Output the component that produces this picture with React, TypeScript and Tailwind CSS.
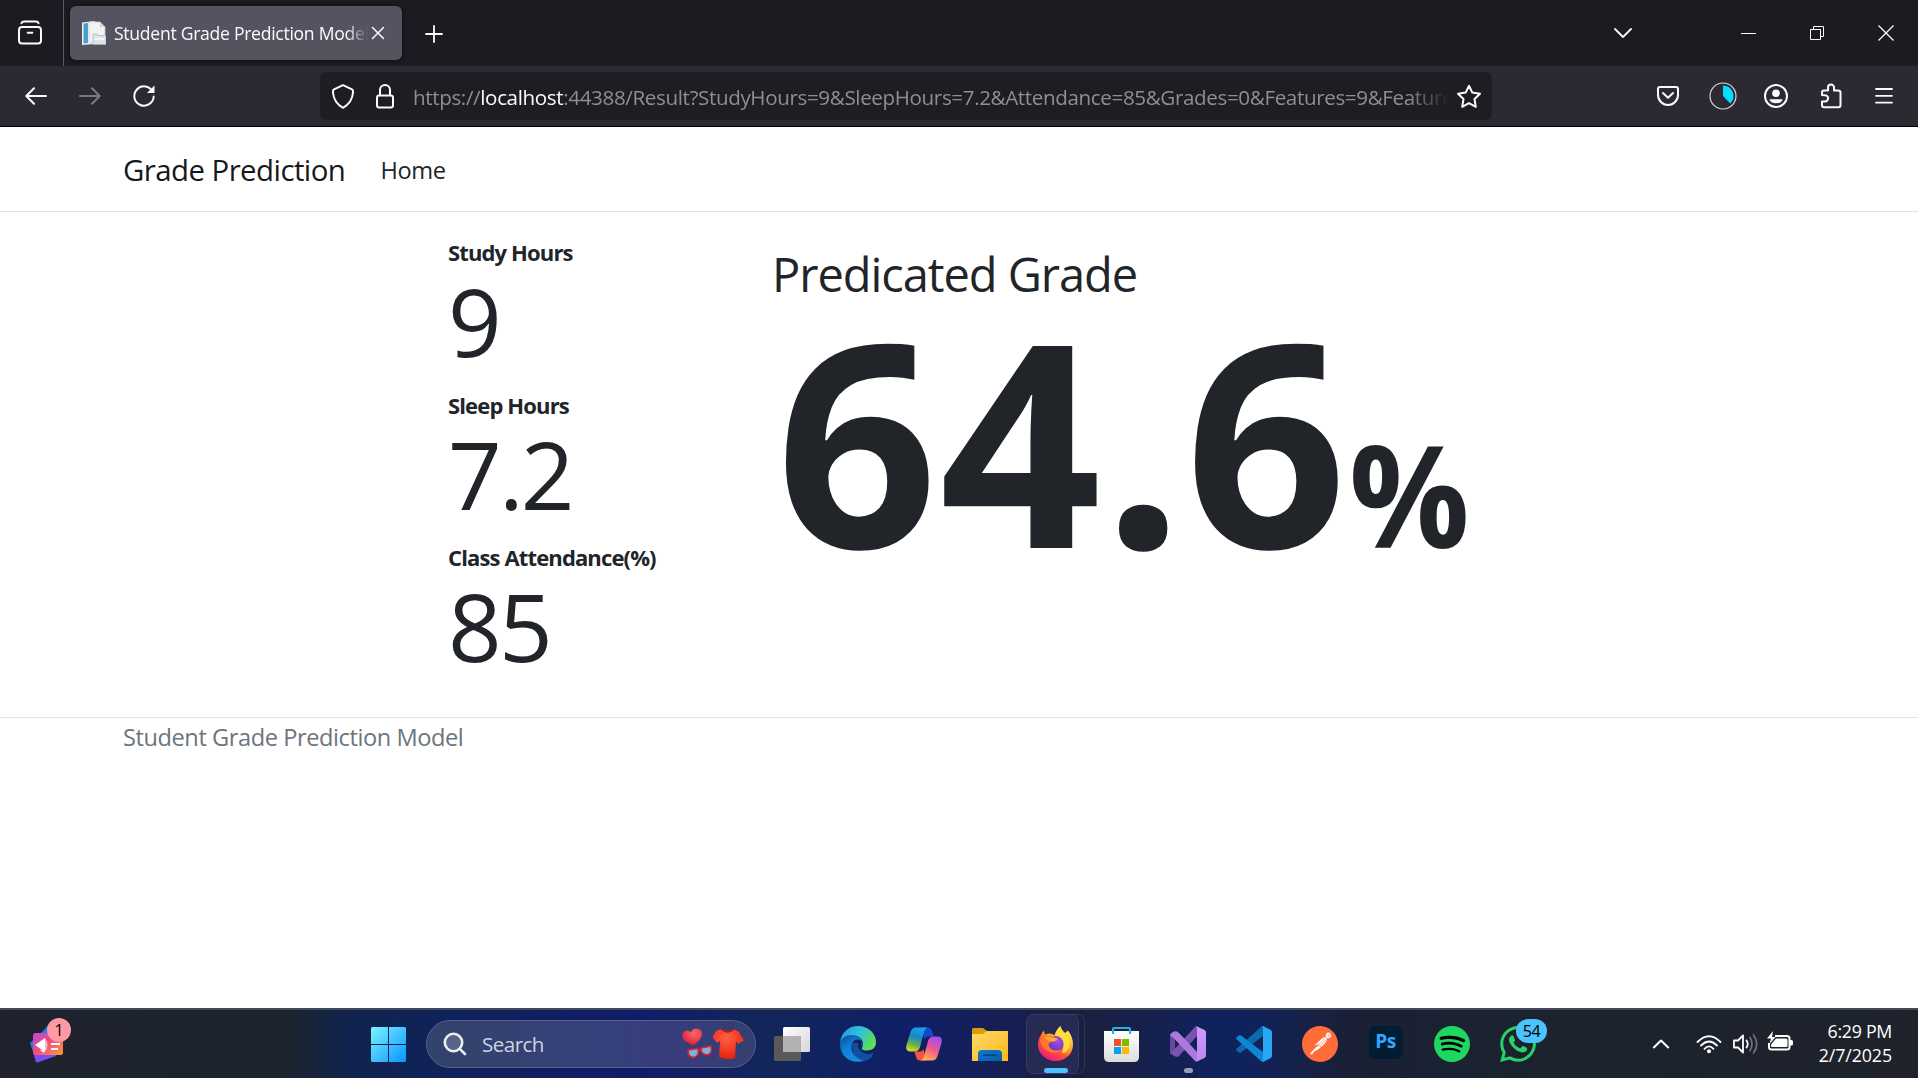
import type { ReactNode } from "react";
import { SiPostman, SiSpotify, SiWhatsapp } from "react-icons/si";

function TabStrip() {
  return (
    <div className="flex h-[66px] items-center bg-[#1c1b22] text-[#fbfbfe]">
      <div className="flex h-full w-16 items-center border-r border-[#5b5a66] pl-[17px]">
        <svg width="26" height="26" viewBox="0 0 26 26" fill="none" stroke="currentColor" strokeWidth="2" strokeLinecap="round">
          <path d="M4.5 3.2 Q5 1.5 7 1.5 H19 Q21 1.5 21.5 3.2" />
          <rect x="2" y="7" width="22" height="16.5" rx="3" />
          <path d="M10.7 12.8 h4.6" />
        </svg>
      </div>
      <div className="ml-1.5 flex h-[54px] w-[332px] items-center rounded-md bg-[#55535f] pl-3 shadow-[0_0_4px_rgba(0,0,0,0.6)]">
        <svg width="24" height="24" viewBox="0 0 24 24">
          <path d="M0 1.5 L13 0 V23 L0 24z" fill="#eef3f6" />
          <path d="M1.5 2.5 L6 2 V22 L1.5 22.5z" fill="#4b9fd0" />
          <path d="M7 1 H18 L23 6 V22 H7z" fill="#f0f2f4" stroke="#cdd4da" strokeWidth=".7" />
          <path d="M18 1 v5 h5z" fill="#cfd5da" />
          <path d="M11 13 h4 l1 1.5 h8 V23.5 H11z" fill="#dfe3e8" stroke="#a9b1ba" strokeWidth=".7" />
          <path d="M12.5 18 H22.5" stroke="#f8fafb" strokeWidth="1.5" />
        </svg>
        <div className="ml-2 w-[254px] overflow-hidden whitespace-nowrap text-[17.6px] leading-[26px] tracking-[-0.29px] [mask-image:linear-gradient(to_right,black_232px,transparent_254px)]">
          Student Grade Prediction Model
        </div>
        <svg className="ml-[3px]" width="14" height="14" viewBox="0 0 14 14" stroke="currentColor" strokeWidth="1.5" strokeLinecap="round">
          <path d="M1.5 1.5 L12.5 12.5 M12.5 1.5 L1.5 12.5" />
        </svg>
      </div>
      <svg className="ml-[23px] mt-[2px]" width="18" height="18" viewBox="0 0 18 18" stroke="currentColor" strokeWidth="1.8" strokeLinecap="round">
        <path d="M9 1 V17 M1 9 H17" />
      </svg>
      <div className="ml-auto flex items-center">
        <svg width="18" height="10" viewBox="0 0 18 10" fill="none" stroke="currentColor" strokeWidth="1.8" strokeLinecap="round" strokeLinejoin="round">
          <path d="M1 1 L9 9 L17 1" />
        </svg>
        <div className="ml-[109px] h-px w-[15px] bg-white" />
        <svg className="ml-[54px]" width="14" height="14" viewBox="0 0 14 14" fill="none" stroke="currentColor" strokeWidth="1">
          <path d="M.5 3.5 h10 v10 h-10z M3.5 3.5 v-3 h10 v10 h-3" />
        </svg>
        <svg className="ml-[54px] mr-6" width="16" height="16" viewBox="0 0 16 16" stroke="currentColor" strokeWidth="1.3">
          <path d="M.5 .5 L15.5 15.5 M15.5 .5 L.5 15.5" />
        </svg>
      </div>
    </div>
  );
}

function Toolbar() {
  return (
    <div className="flex h-[61px] items-center border-b border-black bg-[#2b2a33] text-[#fbfbfe]">
      <svg className="ml-[25px]" width="22" height="18" viewBox="0 0 22 18" fill="none" stroke="currentColor" strokeWidth="2" strokeLinecap="round" strokeLinejoin="round">
        <path d="M21 9 H1.5 M9 1.2 L1.3 9 L9 16.8" />
      </svg>
      <svg className="ml-8 text-[#7b7a82]" width="22" height="18" viewBox="0 0 22 18" fill="none" stroke="currentColor" strokeWidth="2" strokeLinecap="round" strokeLinejoin="round">
        <path d="M1 9 H20.5 M13 1.2 L20.7 9 L13 16.8" />
      </svg>
      <svg className="ml-[31px]" width="24" height="24" viewBox="0 0 24 24" fill="none" stroke="currentColor" strokeWidth="2" strokeLinecap="round">
        <path d="M20.6 7.5 A9.7 9.7 0 1 0 21.7 12.5" />
        <path d="M22.500 1.500 V9 H15z" fill="currentColor" stroke="none" />
      </svg>
      <div className="ml-[164px] flex h-12 w-[1172px] items-center rounded-md bg-[#1e1d24] pl-3">
        <svg width="22" height="25" viewBox="0 0 22 25" fill="none" stroke="currentColor" strokeWidth="2" strokeLinejoin="round">
          <path d="M11 1.2 L20 5.3 Q21.3 6 21 8.5 Q20.3 18.5 11 23.8 Q1.7 18.5 1 8.5 Q.7 6 2 5.3z" />
        </svg>
        <svg className="ml-[21px]" width="20" height="25" viewBox="0 0 20 25" fill="none" stroke="currentColor" strokeWidth="2">
          <rect x="2" y="11.5" width="16" height="12" rx="2.2" />
          <path d="M5 11.5 V6 a5 5 0 0 1 10 0 V11.5" />
        </svg>
        <div className="ml-[18px] mt-[2px] w-[1036px] overflow-hidden whitespace-nowrap text-[20.6px] leading-7 tracking-[-0.37px] text-[#8f8e94] [mask-image:linear-gradient(to_right,black_995px,transparent_1036px)]">
          https://<span className="text-[#fbfbfe]">localhost</span>
          :44388/Result?StudyHours=9&amp;SleepHours=7.2&amp;Attendance=85&amp;Grades=0&amp;Features=9&amp;Features=7.2
        </div>
        <svg className="ml-[7px] shrink-0" width="26" height="25" viewBox="0 0 26 25" fill="none" stroke="currentColor" strokeWidth="2" strokeLinejoin="round">
          <path d="M13 1.8 L16.3 8.6 L24 9.7 L18.5 15 L19.8 22.8 L13 19.1 L6.2 22.8 L7.5 15 L2 9.7 L9.7 8.6z" />
        </svg>
      </div>
      <div className="ml-auto flex items-center pr-[25px]">
        <svg width="22" height="20" viewBox="0 0 22 20" fill="none" stroke="currentColor" strokeWidth="2" strokeLinecap="round" strokeLinejoin="round">
          <path d="M3 1 H19 Q21 1 21 3 V9 A10 10 0 0 1 1 9 V3 Q1 1 3 1z" />
          <path d="M6 7 L11 11.8 L16 7" />
        </svg>
        <svg className="ml-[30px]" width="28" height="28" viewBox="0 0 28 28" fill="none">
          <circle cx="14" cy="14" r="13" stroke="#d8d8dc" strokeWidth="1.2" />
          <path d="M14 14 V3.5 A10.5 10.5 0 0 1 21.2 21.6z" fill="#00ddff" />
        </svg>
        <svg className="ml-[26px]" width="26" height="26" viewBox="0 0 26 26" fill="none">
          <circle cx="13" cy="13" r="11" stroke="currentColor" strokeWidth="2" />
          <circle cx="13" cy="10.3" r="3.8" fill="currentColor" />
          <path d="M6.3 16.2 H19.7 Q18.5 20.3 13 20.3 Q7.5 20.3 6.3 16.2z" fill="currentColor" />
        </svg>
        <svg className="ml-[31px]" width="22" height="26" viewBox="0 0 22 26" fill="none" stroke="currentColor" strokeWidth="2" strokeLinejoin="round">
          <path d="M2 12 V9.5 Q2 7.5 4 7.5 H8 V4.5 a3 3 0 0 1 6 0 V7.5 H18 Q20.5 7.5 20.5 9.5 V22 Q20.5 24.2 18.5 24.2 H4 Q2 24.2 2 22.2 V18.5 H5 a3 3 0 0 0 0 -6.3z" />
        </svg>
        <svg className="ml-[33px]" width="18" height="18" viewBox="0 0 18 18" stroke="currentColor" strokeWidth="1.8" strokeLinecap="round">
          <path d="M1 2 H17 M1 8.8 H17 M1 15.6 H17" />
        </svg>
      </div>
    </div>
  );
}

function Stat({ label, value }: { label: string; value: string }) {
  return (
    <div className="h-[152.5px]">
      <div className="text-[22px] font-bold leading-[26px] tracking-[-0.86px]">{label}</div>
      <div className="text-[94px] leading-[113px] tracking-[-2.8px]">{value}</div>
    </div>
  );
}

function Page() {
  return (
    <div className="flex h-[881px] flex-col bg-white text-[#212529]">
      <header className="flex h-[85px] items-start border-b border-[#dee2e6] pl-[123px] pt-[19px]">
        <span className="w-[257.500px] text-[29.4px] leading-[48px] tracking-[-0.55px] text-[#16191c]">Grade Prediction</span>
        <span className="text-[23.6px] leading-[48px] tracking-[-0.4px]">Home</span>
      </header>
      <main className="flex h-[505px] pl-[448px] pt-[27px]">
        <div className="w-[324px]">
          <Stat label="Study Hours" value="9" />
          <Stat label="Sleep Hours" value="7.2" />
          <Stat label="Class Attendance(%)" value="85" />
        </div>
        <div>
          <h1 className="mt-[5px] text-[47px] leading-[60px] tracking-[-1.05px]">Predicated Grade</h1>
          <div className="ml-[4px] flex items-baseline whitespace-nowrap font-bold leading-[270px]">
            <span className="text-[283px] tracking-[1.6px]">64.6</span>
            <span className="inline-block origin-left scale-x-[0.95] text-[141px]">%</span>
          </div>
        </div>
      </main>
      <footer className="border-t border-[#dee2e6] pl-[123px] text-[23.6px] leading-[39px] tracking-[-0.43px] text-[#6c757d]">
        Student Grade Prediction Model
      </footer>
    </div>
  );
}

function Cell({ children }: { children: ReactNode }) {
  return <div className="relative flex h-full w-[66px] items-center justify-center">{children}</div>;
}

function NewsIcon() {
  return (
    <svg width="42" height="46" viewBox="0 0 42 46">
      <defs>
        <linearGradient id="news" x1="0" y1="0" x2="1" y2="1">
          <stop offset="0" stopColor="#b44be0" />
          <stop offset=".45" stopColor="#f5487f" />
          <stop offset="1" stopColor="#ff9a3a" />
        </linearGradient>
      </defs>
      <path d="M0 25 L14 12 L18 7 L26 30 L5 40z" fill="#1f7de0" />
      <path d="M3 32 H28 L26 38 L9 44 Q6 45 5.5 43z" fill="#7a4df3" />
      <rect x="3" y="15" width="30" height="22" rx="2.5" fill="url(#news)" />
      <path d="M5 27 L15 20 V34z" fill="#fff" />
      <path d="M15 20 Q20 27 15 34z" fill="#ffb3cf" />
      <path d="M10 32 h4 v3z" fill="#fff" />
      <path d="M21 26 h9 M21 31 h7" stroke="#fff" strokeWidth="2" />
    </svg>
  );
}

function StartIcon() {
  return (
    <svg width="35" height="35" viewBox="0 0 35 35">
      <defs>
        <linearGradient id="start" gradientUnits="userSpaceOnUse" x1="0" y1="0" x2="35" y2="35">
          <stop offset="0" stopColor="#7df3ff" />
          <stop offset="1" stopColor="#0894ff" />
        </linearGradient>
      </defs>
      <path fill="url(#start)" d="M1 0 H17 V17 H0 V1z M18 0 H34 L35 1 V17 H18z M0 18 H17 V35 H1 L0 34z M18 18 H35 V34 L34 35 H18z" />
    </svg>
  );
}

function SearchArt() {
  return (
    <svg width="64" height="34" viewBox="0 0 64 34">
      <defs>
        <radialGradient id="heart" cx=".6" cy=".3" r=".8">
          <stop offset="0" stopColor="#ff6a6a" />
          <stop offset="1" stopColor="#d3152c" />
        </radialGradient>
        <radialGradient id="shirt" cx=".45" cy=".3" r=".7">
          <stop offset="0" stopColor="#ff6044" />
          <stop offset="1" stopColor="#e8200f" />
        </radialGradient>
      </defs>
      <path d="M12 18.5 C5 15 1 12.5 1.3 8 C1.7 3.5 7 1.8 9.8 5.5 C11 1 17 .3 20 3.5 C23.5 8 18 15 12 18.5z" fill="url(#heart)" />
      <g fill="#7fb0d8" stroke="#d81f35" strokeWidth="1.6" strokeLinejoin="round">
        <path d="M7 23 L17 21.5 Q18.5 28 14 30 Q9 31 7.5 27z" />
        <path d="M20 21 L30 19 Q31.5 25.5 27.5 27.5 Q22.5 29 20.5 24.5z" />
        <path d="M17 23 L20 22.5" />
      </g>
      <path d="M40 2 Q47 6 53 2 L58 5 L63 13.5 L57 17 L55 14 L54 31 Q46 33.5 38 30 L39 14 L36 16 L31.5 10 L35 4z" fill="url(#shirt)" />
      <path d="M40 2 Q47 8 53 2" fill="none" stroke="#b3150c" strokeWidth="1.2" />
    </svg>
  );
}

function TaskViewIcon() {
  return (
    <svg width="36" height="36" viewBox="0 0 36 36">
      <defs>
        <linearGradient id="tv" x1="0" y1="0" x2="1" y2="1">
          <stop offset="0" stopColor="#fff" />
          <stop offset="1" stopColor="#d6d6d6" />
        </linearGradient>
      </defs>
      <rect x="0" y="10" width="27" height="25" rx="1.5" fill="#595959" />
      <rect x="9" y="1" width="27" height="25" rx="1.5" fill="url(#tv)" />
      <path d="M9 10 H27 V26 H10 L9 25z" fill="#b2b2b4" />
    </svg>
  );
}

function EdgeIcon() {
  return (
    <svg width="36" height="36" viewBox="0 0 36 36">
      <defs>
        <linearGradient id="edgeTop" x1="0" y1=".2" x2="1" y2=".6">
          <stop offset="0" stopColor="#1a9be0" />
          <stop offset=".5" stopColor="#2fc2d8" />
          <stop offset="1" stopColor="#63e04d" />
        </linearGradient>
        <linearGradient id="edgeMid" x1="0" y1="0" x2=".6" y2="1">
          <stop offset="0" stopColor="#0c4c94" />
          <stop offset=".5" stopColor="#0f7fd8" />
          <stop offset="1" stopColor="#168de6" />
        </linearGradient>
      </defs>
      <path d="M11 17 H26 V30 H33 A18 18 0 0 1 16 35z" fill="#104d9c" />
      <path d="M0 18 C1 11 7 8.5 12 9 C18 9.5 21 13 21 14.5 C17 12 12 14 11.5 20 C11 28 17 33 24 34.5 C12 39 0 31 0 18z" fill="url(#edgeMid)" />
      <path d="M0 17 C1 6 9 0 18 0 C29 0 36 8 36 16 C36 22 32 24.5 27 24.5 C23 24.5 21.5 23 22 22 C25 18 22 9 12 9 C6 9 1.5 12 0 17z" fill="url(#edgeTop)" />
      <path d="M22 22 C20 24 24 26.5 34 23.5 L36 25 L34 29 Q28 31 22 28 Q16 24 18.5 17 Q21 13.5 22 22z" fill="#111f62" />
      <path d="M18 17 C17 25 25 30 34 27 C32 31 28 34 23 34.5 C14 32 11 25 14 19z" fill="#124f9f" />
    </svg>
  );
}

function CopilotIcon() {
  return (
    <svg width="36" height="34" viewBox="0 0 36 34">
      <defs>
        <linearGradient id="copA" x1=".6" y1="0" x2=".3" y2="1">
          <stop offset="0" stopColor="#16a5e8" />
          <stop offset=".4" stopColor="#1688c8" />
          <stop offset=".7" stopColor="#5fb052" />
          <stop offset="1" stopColor="#e6d51c" />
        </linearGradient>
        <linearGradient id="copB" x1=".7" y1="0" x2=".3" y2="1">
          <stop offset="0" stopColor="#a24cf0" />
          <stop offset=".5" stopColor="#f2578f" />
          <stop offset="1" stopColor="#ffb250" />
        </linearGradient>
      </defs>
      <path d="M16 .5 H22 Q25 .5 26 4 L27.5 9.5 H22 Q19.5 9.5 18.5 12z" fill="#1746d0" />
      <path d="M20 33.5 H14 Q11 33.5 10 30 L8.5 24.5 H14 Q16.5 24.5 17.5 22z" fill="#f2573f" />
      <path d="M10 .5 H22 Q19 1 18 5 L14 20 Q12.7 24.5 8.5 24.5 H4.5 Q-1 24.5 .5 18 L4.5 5 Q6 .5 10 .5z" fill="url(#copA)" />
      <path d="M26 33.5 H14 Q17 33 18 29 L22 14 Q23.3 9.5 27.5 9.5 H31.5 Q37 9.5 35.5 16 L31.5 29 Q30 33.5 26 33.5z" fill="url(#copB)" />
    </svg>
  );
}

function ExplorerIcon() {
  return (
    <svg width="36" height="33" viewBox="0 0 36 33">
      <defs>
        <linearGradient id="fold" x1="0" y1="0" x2="1" y2="1">
          <stop offset="0" stopColor="#ffd968" />
          <stop offset="1" stopColor="#fbb81a" />
        </linearGradient>
        <linearGradient id="foldBlue" x1="0" y1="0" x2="1" y2="1">
          <stop offset="0" stopColor="#0d7ad4" />
          <stop offset="1" stopColor="#0a5aa6" />
        </linearGradient>
      </defs>
      <path d="M0 1.5 Q0 0 1.5 0 H11 L15 3 V9 H0z" fill="#dd9b0b" />
      <path d="M0 6 H11 L14.5 3 H36 V33 H0z" fill="url(#fold)" />
      <path d="M6 33 V26 Q6 22 10 22 H26 Q30 22 30 26 V33z" fill="url(#foldBlue)" />
      <path d="M11 27.2 H25" stroke="#0a4480" strokeWidth="1.6" />
    </svg>
  );
}

function FirefoxIcon() {
  return (
    <svg width="35" height="35" viewBox="0 0 35 35">
      <defs>
        <linearGradient id="fxBody" x1=".85" y1=".1" x2=".25" y2=".95">
          <stop offset="0" stopColor="#fff04a" />
          <stop offset=".35" stopColor="#ffb02e" />
          <stop offset=".65" stopColor="#ff4f3e" />
          <stop offset="1" stopColor="#ee1a7c" />
        </linearGradient>
        <radialGradient id="fxGlobe" cx=".65" cy=".3" r=".8">
          <stop offset="0" stopColor="#a44be8" />
          <stop offset="1" stopColor="#5a37c0" />
        </radialGradient>
      </defs>
      <path d="M3 9 Q4 6 6 4.5 Q6 7 7.5 8.5 Q11 6.5 15 8.5 L17 9 Q18 4 22.5 0 Q23 4 27 7 L30 4.5 Q35 11 35 18.5 C35 28 27.5 35 17.5 35 C8 35 0 28 0 18.5 Q0 13 3 9z" fill="url(#fxBody)" />
      <path d="M17 9 Q18 4 22.5 0 Q23 4 28 8 Q33 13 31 22 Q29 27 24 27 Q27 20 24.5 14 Q22 10 17 9z" fill="#ffdb3d" />
      <circle cx="17.5" cy="18" r="8" fill="url(#fxGlobe)" />
      <path d="M2 14 Q6 8 11 10 Q15 10 19.500 13 Q18.500 15.500 14.500 15.500 Q11 16 10.500 19 Q12 24.500 19 24.500 Q22 24 23.500 23 Q20 28 13.500 26.500 Q4 25 2 14z" fill="#ff7a26" />
      <path d="M6 11 Q10 10 14 11.5 Q18 11 19.5 13 Q18.5 15.5 14.5 15.5 Q9 15 6 11z" fill="#ffa52e" />
    </svg>
  );
}

function StoreIcon() {
  return (
    <svg width="35" height="36" viewBox="0 0 35 36">
      <defs>
        <linearGradient id="bag" x1="0" y1="0" x2="0" y2="1">
          <stop offset="0" stopColor="#fff" />
          <stop offset="1" stopColor="#dcdcdc" />
        </linearGradient>
      </defs>
      <path d="M0 5 H35 V31 Q35 36 30 36 H5 Q0 36 0 31z" fill="url(#bag)" />
      <path d="M9 8 V3 Q9 2 10 2 H25 Q26 2 26 3 V8" fill="none" stroke="#25aee8" strokeWidth="2.2" />
      <path d="M10 13 h7 v7 h-7z" fill="#f25022" />
      <path d="M18 13 h7 v7 h-7z" fill="#7fba00" />
      <path d="M10 21 h7 v7 h-7z" fill="#00a4ef" />
      <path d="M18 21 h7 v7 h-7z" fill="#ffb900" />
    </svg>
  );
}

function VisualStudioIcon() {
  return (
    <svg width="36" height="36" viewBox="0 0 36 36">
      <defs>
        <linearGradient id="vs" x1="0" y1="0" x2="0" y2="1">
          <stop offset="0" stopColor="#d29bff" />
          <stop offset="1" stopColor="#be86ee" />
        </linearGradient>
      </defs>
      <path d="M0 8 L5 5.5 V12 L5 24 V30.5 L0 27.5z" fill="#6b479c" />
      <path d="M1 27.5 Q0 27 5 22.5 L25 1 L27 0 V10 L9 30 Q7.5 31.5 5.5 30.5z" fill="#7b52b0" />
      <path d="M0 9 Q1 7 3 6 L5.5 5.3 Q7 5 9 7 L27 26 V36 L25 35 L5 13.5 Q2 10.5 0 9z" fill="#ac7add" />
      <path d="M26 0 L34.5 4 Q36 4.7 36 6.5 V29.5 Q36 31.3 34.5 32 L26 36 Q27 35.5 27 34 V2 Q27 .5 26 0z" fill="url(#vs)" />
    </svg>
  );
}

function VSCodeIcon() {
  return (
    <svg width="36" height="36" viewBox="0 0 36 36">
      <path d="M.8 25 Q-.5 24 .8 22.5 L25 1 L27 0 V10 L5 26.5 Q4 27.3 3 26.6z" fill="#0b69ad" />
      <path d="M.8 11 Q-.5 12 .8 13.5 L25 35 L27 36 V26 L5 9.5 Q4 8.7 3 9.4z" fill="#0e86d4" />
      <path d="M25 1 L27 0 L34.5 3.8 Q36 4.6 36 6.3 V29.7 Q36 31.4 34.5 32.2 L27 36 L25 35 Q27 36 27 33.5 V2.5 Q27 0 25 1z" fill="#27a8f2" />
    </svg>
  );
}

function Tray() {
  return (
    <div className="ml-auto flex h-full items-center pr-[26px] text-white">
      <svg width="18" height="10" viewBox="0 0 18 10" fill="none" stroke="currentColor" strokeWidth="2" strokeLinejoin="round">
        <path d="M1.3 9 L9 1.5 L16.7 9" />
      </svg>
      <svg className="ml-[26px]" width="26" height="19" viewBox="0 0 26 19" fill="none" stroke="currentColor" strokeWidth="1.8" strokeLinecap="round">
        <path d="M1.5 7 Q13 -4.5 24.5 7 M5 10.5 Q13 2.5 21 10.5 M8.5 13.8 Q13 9 17.5 13.8" />
        <circle cx="13" cy="16.3" r="2" fill="currentColor" stroke="none" />
      </svg>
      <svg className="ml-[11px]" width="25" height="20" viewBox="0 0 25 20" fill="none" stroke="currentColor" strokeWidth="1.8" strokeLinejoin="round" strokeLinecap="round">
        <path d="M1 6.5 H5 L10 1.5 V18.5 L5 13.5 H1z M13.5 6.5 Q16 10 13.5 13.5" />
        <path d="M17 3.5 Q21 10 17 16.5 M20.5 1 Q27 10 20.5 19" stroke="#6b6f77" />
      </svg>
      <svg className="-mt-[5px] ml-[9px]" width="26" height="21" viewBox="0 0 26 21">
        <path d="M8 5 H20 Q22.5 5 22.5 7.5 V16 Q22.5 18.5 20 18.5 H4.5 Q2 18.5 2 16 V12" fill="none" stroke="#fff" strokeWidth="2" />
        <path d="M9 7.5 H19 Q20.5 7.5 20.5 9 V14.5 Q20.5 16 19 16 H5.5 Q4 16 4 14.5 V13.5z" fill="#fff" />
        <path d="M23 9 h1.5 Q26 9 26 10.5 v2.5 Q26 14.5 24.5 14.5 H23z M6 0 L0 7.5 H4 L2.5 13 L8.5 6 H5z" fill="#fff" />
      </svg>
      <div className="-mt-[2px] w-[99px] text-right text-[17.8px] leading-6 tracking-[-0.1px]">
        <div className="tracking-[-0.3px]">6:29 PM</div>
        <div>2/7/2025</div>
      </div>
    </div>
  );
}

function Taskbar() {
  return (
    <div className="flex h-[70px] items-center border-t-2 border-[#42495a] bg-[linear-gradient(to_right,#1f222c_0px,#1b232e_290px,#10244f_350px,#10225a_450px,#111c68_640px,#12265a_765px,#101f66_900px,#151f55_1000px,#1a1f3f_1090px,#10225c_1210px,#10225a_1255px,#1a2035_1350px,#1b232e_1550px,#1f222b_1918px)]">
      <div className="relative ml-[30px] mt-[-6px] h-[46px] w-[42px]">
        <NewsIcon />
        <div className="absolute left-[17px] top-0 flex size-6 items-center justify-center rounded-full bg-[#ff99a4] text-[16px] leading-none text-black">1</div>
      </div>
      <div className="ml-[299px]">
        <StartIcon />
      </div>
      <div className="ml-5 flex h-12 w-[330px] items-center rounded-full border border-[#52608a] bg-[linear-gradient(to_right,#33426a,#34417a_50%,#383c7c_75%,#343f70)] pl-4">
        <svg width="24" height="24" viewBox="0 0 24 24" fill="none" stroke="#eceef2" strokeWidth="2.6">
          <circle cx="10.5" cy="10.5" r="8.7" fill="#56638a" />
          <path d="M16.8 16.8 L22 22" strokeLinecap="round" />
        </svg>
        <span className="ml-[15px] text-[20.6px] tracking-[-0.55px] text-[#ced3e2]">Search</span>
        <span className="ml-auto mr-[10px]">
          <SearchArt />
        </span>
      </div>
      <div className="ml-[3px] flex h-full">
        <Cell><TaskViewIcon /></Cell>
        <Cell><EdgeIcon /></Cell>
        <Cell><CopilotIcon /></Cell>
        <Cell><ExplorerIcon /></Cell>
        <Cell>
          <div className="absolute left-[7px] top-1 h-[60px] w-[55px] rounded-lg border border-white/10" />
          <div className="absolute left-[3px] top-1 h-[60px] w-[53px] rounded-lg border border-[#343b61] bg-[#252b52]" />
          <div className="relative -mt-px mr-[2px]">
            <FirefoxIcon />
          </div>
          <div className="absolute bottom-[5px] left-[21px] h-[5px] w-6 rounded-full bg-[#4cc2ff]" />
        </Cell>
        <Cell>
          <div className="mr-[2px]">
            <StoreIcon />
          </div>
        </Cell>
        <Cell>
          <VisualStudioIcon />
          <div className="absolute bottom-[5px] left-[29px] h-[5px] w-[9px] rounded-full bg-[#9a9cb2]" />
        </Cell>
        <Cell><VSCodeIcon /></Cell>
        <Cell>
          <div className="rounded-full bg-[radial-gradient(circle,white_60%,transparent_62%)]">
            <SiPostman size={36} color="#ff6c37" />
          </div>
        </Cell>
        <Cell>
          <div className="mt-[-3px] flex h-[33px] w-[34px] items-center justify-center rounded-md bg-[#001d33] pb-[2px] pr-px text-[19px] font-bold tracking-[-0.5px] text-[#31a8ff]">Ps</div>
        </Cell>
        <Cell>
          <div className="rounded-full bg-[radial-gradient(circle,black_60%,transparent_62%)]">
            <SiSpotify size={36} color="#1ed760" />
          </div>
        </Cell>
        <Cell>
          <SiWhatsapp size={36} color="#25d366" />
          <div className="absolute left-[31px] top-[9px] flex h-6 w-[31px] items-center justify-center rounded-full bg-[#4cc2ff] text-[16px] leading-none tracking-[-0.5px] text-black">54</div>
        </Cell>
      </div>
      <Tray />
    </div>
  );
}

export default function App() {
  return (
    <div className="flex h-[1078px] w-[1918px] flex-col overflow-hidden font-['Open_Sans',sans-serif]">
      <TabStrip />
      <Toolbar />
      <Page />
      <Taskbar />
    </div>
  );
}
